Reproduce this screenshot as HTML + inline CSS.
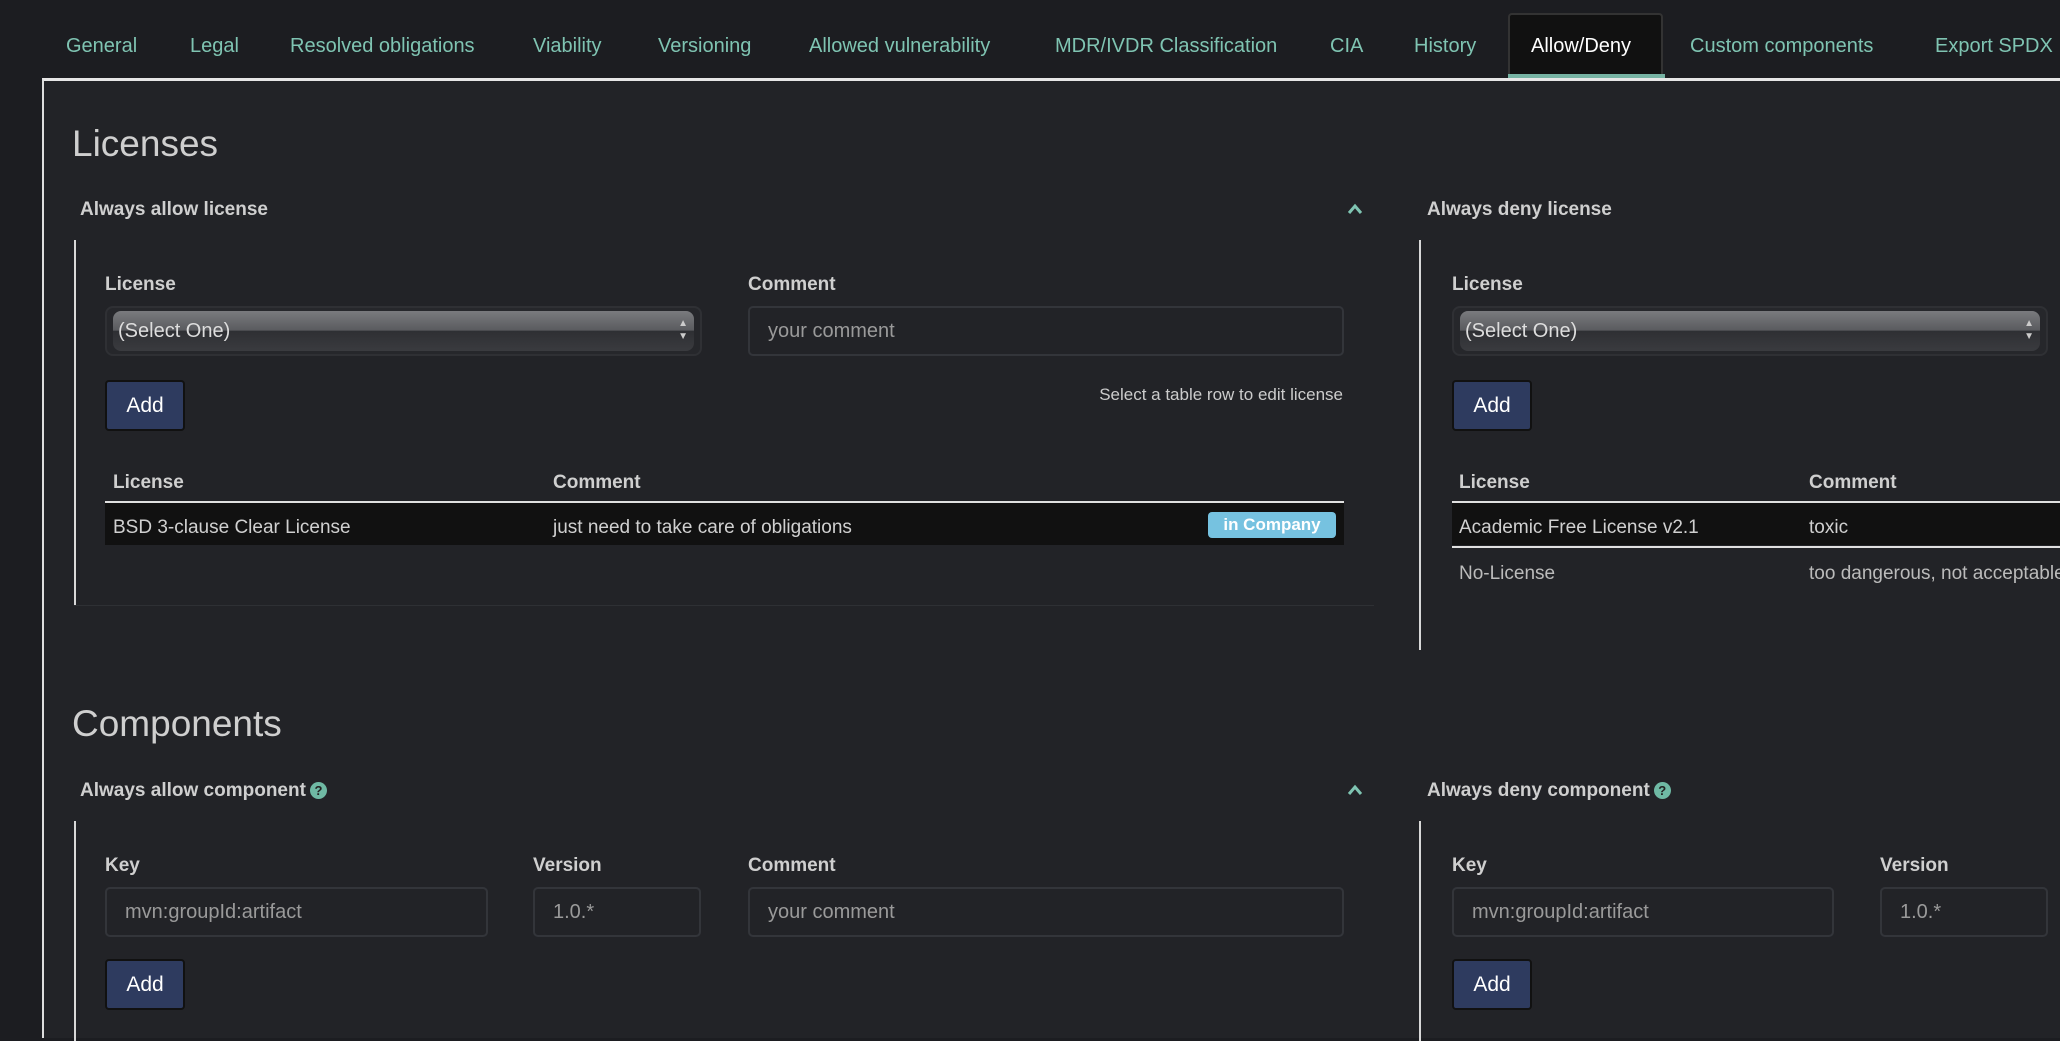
<!DOCTYPE html>
<html><head><meta charset="utf-8"><style>
*{box-sizing:border-box;margin:0;padding:0}
body{width:2060px;height:1028px;overflow:hidden;background:#1c1d21;font-family:"Liberation Sans",sans-serif;color:#d0d0d0;position:relative}
.a{position:absolute;white-space:nowrap}
.tab{position:absolute;top:29px;font-size:20px;color:#7fc4b2;line-height:34px}
.panel{position:absolute;left:42px;top:78px;width:2030px;height:960px;background:#222327;border-left:2px solid #ddd;border-top:3px solid #e6e6e6}
.h1{font-size:37px;color:#cfcfcf}
.h3{font-size:19px;font-weight:bold;color:#cfcfcf}
.lbl{font-size:19px;font-weight:bold;color:#cfcfcf}
.inp{position:absolute;height:50px;border:2px solid #33353a;border-radius:5px;background:#222327;font-size:20px;color:#9a9a9a;line-height:46px;padding-left:18px}
.sel{position:absolute;height:50px;border:2px solid #2f3034;border-radius:8px;background:#26272b;padding:3px 6px}
.sel div{height:40px;border-radius:8px;background:linear-gradient(#7a7b7e 0%,#5a5b5f 48%,#2e2f33 50%,#3a3b3f 100%);font-size:20px;color:#ddd;line-height:40px;padding-left:5px;position:relative}
.sel span{position:absolute;right:6px;top:6px;font-size:10px;line-height:13px;color:#ccc}
.btn{position:absolute;width:80px;height:51px;background:#2e3b5f;border:2px solid #111;border-radius:4px;color:#fff;font-size:21px;line-height:47px;text-align:center}
.vl{position:absolute;width:2px;background:#d8d8d8}
.row{position:absolute;background:#111;height:42px}
.td{font-size:19px;color:#d0d0d0}
.chev{position:absolute}
.q{display:inline-block;width:17px;height:17px;border-radius:50%;background:#6fb9a4;color:#222;font-size:13px;line-height:17px;text-align:center;font-weight:bold;vertical-align:1px;margin-left:4px}
</style></head><body>
<div class="a" style="left:1508px;top:13px;width:155px;height:64px;background:#111;border:2px solid #333;border-bottom:none;border-radius:4px 4px 0 0"></div>
<div class="a" style="left:1508px;top:74px;width:157px;height:5px;background:#76b3a3"></div>
<div class="tab" style="left:66px">General</div>
<div class="tab" style="left:190px">Legal</div>
<div class="tab" style="left:290px">Resolved obligations</div>
<div class="tab" style="left:533px">Viability</div>
<div class="tab" style="left:658px">Versioning</div>
<div class="tab" style="left:809px">Allowed vulnerability</div>
<div class="tab" style="left:1055px">MDR/IVDR Classification</div>
<div class="tab" style="left:1330px">CIA</div>
<div class="tab" style="left:1414px">History</div>
<div class="tab" style="left:1531px;color:#fff">Allow/Deny</div>
<div class="tab" style="left:1690px">Custom components</div>
<div class="tab" style="left:1935px">Export SPDX</div>
<div class="panel"></div>

<div class="a h1" style="left:72px;top:123px">Licenses</div>
<div class="a h3" style="left:80px;top:199px">Always allow license</div>
<svg class="chev" style="left:1347px;top:202px" width="16" height="14" viewBox="0 0 16 14"><path d="M2 11 L8 4 L14 11" stroke="#7fc4b2" stroke-width="3" fill="none"/></svg>
<div class="a h3" style="left:1427px;top:199px">Always deny license</div>
<div class="vl" style="left:74px;top:240px;height:366px"></div>
<div class="a" style="left:74px;top:605px;width:1300px;height:1px;background:#2e3034"></div>
<div class="vl" style="left:1419px;top:240px;height:410px"></div>

<div class="a lbl" style="left:105px;top:274px">License</div>
<div class="a lbl" style="left:748px;top:274px">Comment</div>
<div class="sel" style="left:105px;top:306px;width:597px"><div>(Select One)<span>▲<br>▼</span></div></div>
<div class="inp" style="left:748px;top:306px;width:596px">your comment</div>
<div class="btn" style="left:105px;top:380px">Add</div>
<div class="a" style="right:717px;top:385px;font-size:17px;color:#ccc">Select a table row to edit license</div>
<div class="a lbl" style="left:113px;top:472px">License</div>
<div class="a lbl" style="left:553px;top:472px">Comment</div>
<div class="a" style="left:105px;top:501px;width:1239px;height:2px;background:#e0e0e0"></div>
<div class="row" style="left:105px;top:503px;width:1239px"></div>
<div class="a td" style="left:113px;top:517px">BSD 3-clause Clear License</div>
<div class="a td" style="left:553px;top:517px">just need to take care of obligations</div>
<div class="a" style="left:1208px;top:512px;width:128px;height:26px;background:#76c2e0;border-radius:4px;color:#fff;font-weight:bold;font-size:17px;line-height:26px;text-align:center">in Company</div>

<div class="a lbl" style="left:1452px;top:274px">License</div>
<div class="sel" style="left:1452px;top:306px;width:596px"><div>(Select One)<span>▲<br>▼</span></div></div>
<div class="btn" style="left:1452px;top:380px">Add</div>
<div class="a lbl" style="left:1459px;top:472px">License</div>
<div class="a lbl" style="left:1809px;top:472px">Comment</div>
<div class="a" style="left:1452px;top:501px;width:620px;height:2px;background:#e0e0e0"></div>
<div class="row" style="left:1452px;top:503px;width:620px"></div>
<div class="a" style="left:1452px;top:546px;width:620px;height:2px;background:#e0e0e0"></div>
<div class="a td" style="left:1459px;top:517px">Academic Free License v2.1</div>
<div class="a td" style="left:1809px;top:517px">toxic</div>
<div class="a td" style="left:1459px;top:563px;color:#bbb">No-License</div>
<div class="a td" style="left:1809px;top:563px;color:#bbb">too dangerous, not acceptable</div>

<div class="a h1" style="left:72px;top:703px">Components</div>
<div class="a h3" style="left:80px;top:780px">Always allow component<span class="q">?</span></div>
<svg class="chev" style="left:1347px;top:783px" width="16" height="14" viewBox="0 0 16 14"><path d="M2 11 L8 4 L14 11" stroke="#7fc4b2" stroke-width="3" fill="none"/></svg>
<div class="a h3" style="left:1427px;top:780px">Always deny component<span class="q">?</span></div>
<div class="vl" style="left:74px;top:821px;height:220px"></div>
<div class="vl" style="left:1419px;top:821px;height:220px"></div>
<div class="a lbl" style="left:105px;top:855px">Key</div>
<div class="a lbl" style="left:533px;top:855px">Version</div>
<div class="a lbl" style="left:748px;top:855px">Comment</div>
<div class="inp" style="left:105px;top:887px;width:383px">mvn:groupId:artifact</div>
<div class="inp" style="left:533px;top:887px;width:168px">1.0.*</div>
<div class="inp" style="left:748px;top:887px;width:596px">your comment</div>
<div class="btn" style="left:105px;top:959px">Add</div>
<div class="a lbl" style="left:1452px;top:855px">Key</div>
<div class="a lbl" style="left:1880px;top:855px">Version</div>
<div class="inp" style="left:1452px;top:887px;width:382px">mvn:groupId:artifact</div>
<div class="inp" style="left:1880px;top:887px;width:168px">1.0.*</div>
<div class="btn" style="left:1452px;top:959px">Add</div>
</body></html>
